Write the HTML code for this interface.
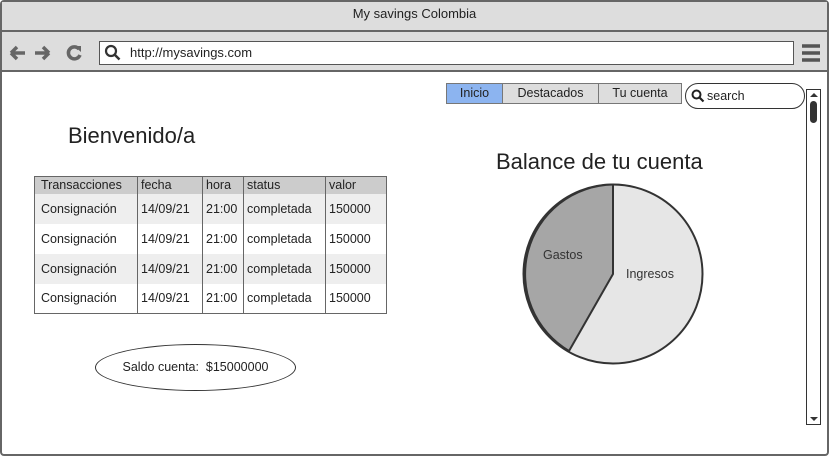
<!DOCTYPE html>
<html><head><meta charset="utf-8"><style>
*{margin:0;padding:0;box-sizing:border-box}
body{width:829px;height:456px;overflow:hidden;background:#fff;font-family:"Liberation Sans",sans-serif;color:#222;position:relative}
.abs{position:absolute}
.frame{left:0;top:0;width:829px;height:456px;border:2px solid #666;border-radius:4px;background:#fff}
.title{left:2px;top:2px;width:825px;height:30px;background:#ddd;border-bottom:2px solid #666;text-align:center;font-size:13px;line-height:24px}
.bar{left:2px;top:32px;width:825px;height:40px;background:#ddd;border-bottom:2px solid #666}
.url{left:99px;top:41px;width:695px;height:24px;background:#fff;border:1.5px solid #555;font-size:13px;line-height:21px;padding-left:30px}
table{border-collapse:collapse;font-size:12.5px}
td{border-left:1px solid #666;padding-left:3px;height:30px}
td:first-child{border-left:none;padding-left:6px}
tr.h td{height:17px;background:#ccc}
tr.g td{background:#eee}
.tab{top:83px;height:21px;border:1px solid #777;font-size:12.5px;line-height:19px;text-align:center;background:#ddd}
</style></head><body>
<div class="abs frame"></div>
<div class="abs title">My savings Colombia</div>
<div class="abs bar"></div>
<svg class="abs" style="left:8px;top:42px" width="80" height="22">
<path d="M3 11h14M3 11l6-6M3 11l6 6" stroke="#666" stroke-width="3.5" fill="none"/>
<path d="M27 11h14M41 11l-6-6M41 11l-6 6" stroke="#666" stroke-width="3.5" fill="none"/>
<path d="M71 7a6 6 0 1 0 1 6" stroke="#666" stroke-width="3.5" fill="none"/><path d="M66 4l7 0 0 6z" fill="#666"/>
</svg>
<div class="abs url">http://mysavings.com</div>
<svg class="abs" style="left:104px;top:44px" width="18" height="18"><circle cx="7" cy="7" r="5" stroke="#333" stroke-width="2.2" fill="none"/><path d="M10.5 10.5l5 5" stroke="#333" stroke-width="2.5"/></svg>
<svg class="abs" style="left:801px;top:43px" width="20" height="20"><path d="M1 3h18M1 10h18M1 17h18" stroke="#555" stroke-width="3.5"/></svg>

<div class="abs tab" style="left:446px;width:57px;background:#8cb4f0">Inicio</div>
<div class="abs tab" style="left:502px;width:97px">Destacados</div>
<div class="abs tab" style="left:598px;width:84px">Tu cuenta</div>
<div class="abs" style="left:685px;top:83px;width:120px;height:26px;border:1px solid #333;border-radius:13px;font-size:12.5px;line-height:24px;padding-left:21px">search</div>
<svg class="abs" style="left:691px;top:89px" width="14" height="14"><circle cx="5.5" cy="5.5" r="4" stroke="#222" stroke-width="2" fill="none"/><path d="M8.5 8.5l4 4" stroke="#222" stroke-width="2.2"/></svg>
<div class="abs" style="left:806px;top:89px;width:15px;height:336px;border:1.5px solid #333;background:#fff"></div>
<div class="abs" style="left:810px;top:101px;width:7px;height:22px;background:#333;border-radius:4px"></div>
<svg class="abs" style="left:808px;top:91px" width="12" height="332"><path d="M2 6l4-4 4 4z M2 326l4 4 4-4z" fill="#333"/></svg>

<div class="abs" style="left:68px;top:123px;font-size:22px">Bienvenido/a</div>
<table class="abs" style="left:34px;top:176px;width:353px;border:1px solid #666">
<colgroup><col style="width:103px"><col style="width:65px"><col style="width:41px"><col style="width:82px"><col></colgroup>
<tr class="h"><td>Transacciones</td><td>fecha</td><td>hora</td><td>status</td><td>valor</td></tr>
<tr class="g"><td>Consignación</td><td>14/09/21</td><td>21:00</td><td>completada</td><td>150000</td></tr>
<tr><td>Consignación</td><td>14/09/21</td><td>21:00</td><td>completada</td><td>150000</td></tr>
<tr class="g"><td>Consignación</td><td>14/09/21</td><td>21:00</td><td>completada</td><td>150000</td></tr>
<tr><td>Consignación</td><td>14/09/21</td><td>21:00</td><td>completada</td><td>150000</td></tr>
</table>
<div class="abs" style="left:95px;top:344px;width:201px;height:47px;border:1px solid #333;border-radius:50%;font-size:12.5px;line-height:45px;text-align:center">Saldo cuenta:&nbsp; $15000000</div>

<div class="abs" style="left:496px;top:149px;font-size:22px">Balance de tu cuenta</div>
<svg class="abs" style="left:0;top:0" width="829" height="456">
<circle cx="613" cy="274" r="89.5" fill="#e6e6e6" stroke="#333" stroke-width="2"/>
<path d="M613 274L613 184.5A89.5 89.5 0 0 0 569 351Z" fill="#a6a6a6" stroke="#333" stroke-width="2" stroke-linejoin="round"/>
<text x="543" y="259" font-size="12.5" font-family="Liberation Sans" fill="#333">Gastos</text>
<text x="626" y="278" font-size="12.5" font-family="Liberation Sans" fill="#333">Ingresos</text>
</svg>
</body></html>
